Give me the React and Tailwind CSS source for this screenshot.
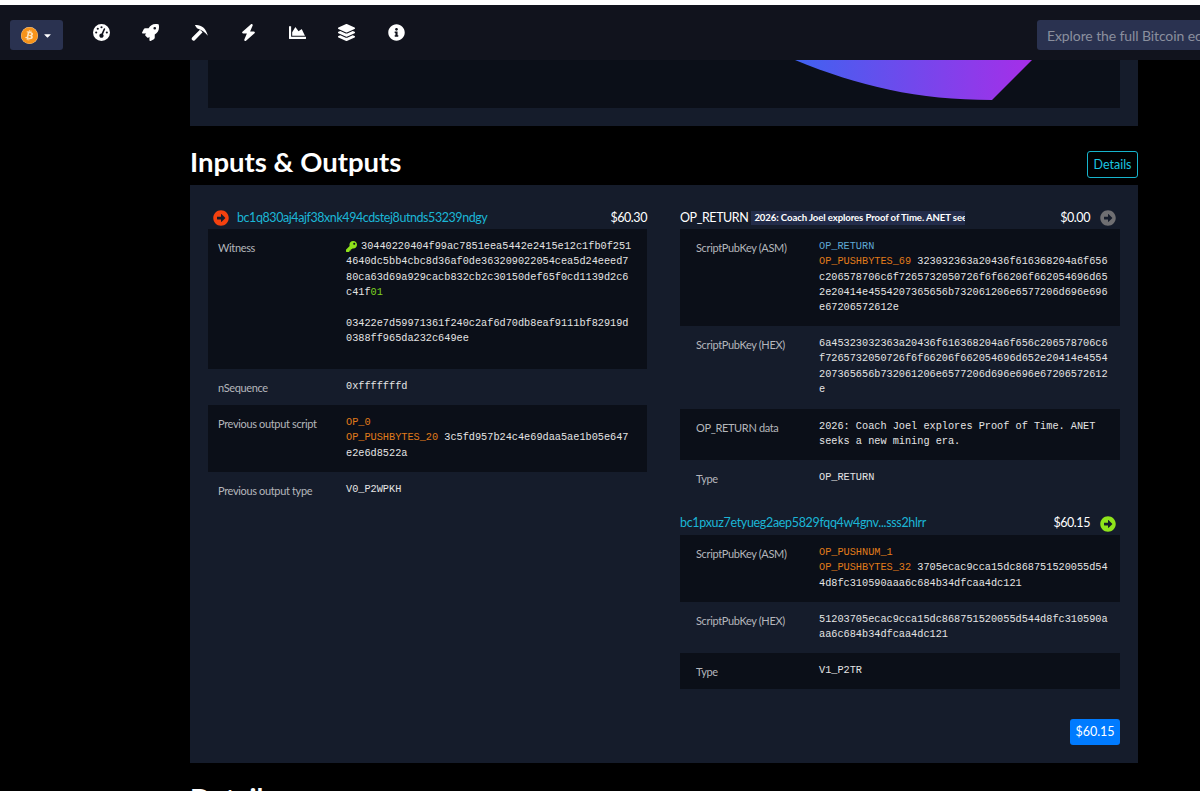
import React from 'react';
import {
  FaChartArea, FaLayerGroup, FaRocket,
  FaInfoCircle, FaArrowAltCircleRight, FaKey, FaCaretDown, FaBitcoin,
} from 'react-icons/fa';
import { FaGaugeHigh, FaBolt } from 'react-icons/fa6';

const Pickaxe = ({ className }) => (
  <svg viewBox="0 0 24 24" className={className} fill="currentColor">
    <path d="M5.5 1.6C13 .4 21 5 23.8 16.5 19.5 11.5 15.5 8.6 8.5 6Z" />
    <path d="M1.6 19 12.6 8l3.8 3.8L5.4 22.8A2.7 2.7 0 0 1 1.6 19Z" />
  </svg>
);

const navIcons = [FaGaugeHigh, FaRocket, Pickaxe, FaBolt, FaChartArea, FaLayerGroup, FaInfoCircle];

const Op = ({ children, blue }) => (
  <span className={blue ? 'text-[#5fa8d3]' : 'text-[#e07b1a]'}>{children}</span>
);

const Row = ({ label, dark, right, h, children }) => (
  <div
    style={{ height: h }}
    className={`flex pt-[9px] ${right ? 'pl-4' : 'pl-[10px]'} ${dark ? 'bg-[#0b0f18]' : ''}`}
  >
    <div className={`${right ? 'w-[123px]' : 'w-[128px]'} mt-[1px] shrink-0 text-[11px] leading-[18px] tracking-[-0.35px] text-[#b4b6bb]`}>
      {label}
    </div>
    <div
      className={`${right ? 'w-[291px]' : 'w-[288px]'} pt-[1px] font-['Liberation_Mono',monospace] text-[10.24px] leading-[15.36px] text-[#e4e4e4] break-all`}
    >
      {children}
    </div>
  </div>
);

const Arrow = ({ color }) => <FaArrowAltCircleRight className={`${color} text-base shrink-0`} />;

const App = () => (
  <div className="h-[791px] w-[1200px] overflow-hidden bg-black font-['Lato',sans-serif] text-white">
    <div className="h-[5px] bg-white" />

    <nav className="flex h-[55px] items-start bg-[#11131d] pl-[10px] pt-[15px]">
      <div className="flex h-[30px] w-[53px] items-center justify-center gap-1 rounded-[3px] bg-[#2a3250]">
        <span className="flex h-[17px] w-[17px] items-center justify-center rounded-full bg-[#fde3bd]">
          <FaBitcoin className="h-[17px] w-[17px] text-[#f7931a]" />
        </span>
        <FaCaretDown className="text-[11px] text-white" />
      </div>
      <div className="ml-[30px] mt-[4px] flex items-center gap-[32.1px]">
        {navIcons.map((Icon, i) => (
          <Icon key={i} className="h-[17px] w-[17px] text-white" />
        ))}
      </div>
      <div className="ml-auto flex h-[30px] w-[163px] items-center overflow-hidden whitespace-nowrap rounded-l-[3px] bg-[#2a3250] pl-[10px] pt-[1px] text-[14px] tracking-[-0.1px] text-[#8a8f9e]">
        Explore the full Bitcoin ecosystem
      </div>
    </nav>

    <main className="mx-[190px] w-[948px]">
      <div className="bg-[#151c2b] px-[18px] pb-[18px]">
        <div className="h-[48px] bg-[#0b0f18]">
          <svg width="912" height="48" viewBox="0 0 912 48">
            <defs>
              <linearGradient id="fee" x1="0" x2="1" y1="0" y2="0">
                <stop offset="0" stopColor="#3f62f0" />
                <stop offset="1" stopColor="#a62ee8" />
              </linearGradient>
            </defs>
            <path d="M587 0C650 26 710 40 784 40L824 0Z" fill="url(#fee)" />
          </svg>
        </div>
      </div>

      <div className="flex h-[59px] items-end justify-between pb-[7px]">
        <h2 className="mb-[-3px] text-[27.5px] font-bold leading-[38px]">Inputs &amp; Outputs</h2>
        <button className="h-[27px] w-[51px] rounded-[3px] border border-[#17b4cc] pt-[1px] text-[12.5px] text-[#1bc5e0]">
          Details
        </button>
      </div>

      <section className="h-[578px] bg-[#151c2b] px-[18px] pt-[22px]">
        <div className="flex justify-between">
          <div className="w-[439px]">
            <div className="flex h-[22px] items-center justify-between pl-[5px] text-[12.5px] tracking-[-0.43px]">
              <div className="flex items-center gap-2">
                <Arrow color="text-[#f4410f]" />
                <a className="text-[#1bb6d6]">bc1q830aj4ajf38xnk494cdstej8utnds53239ndgy</a>
              </div>
              <span>$60.30</span>
            </div>
            <Row label="Witness" dark h={140}>
              <FaKey className="mr-[4px] inline text-[11px] text-[#8fe31b]" />
              30440220404f99ac7851eea5442e2415e12c1fb0f251
              <br />
              4640dc5bb4cbc8d36af0de363209022054cea5d24eeed7
              <br />
              80ca63d69a929cacb832cb2c30150def65f0cd1139d2c6
              <br />
              c41f<span className="text-[#7ed321]">01</span>
              <br />
              <br />
              03422e7d59971361f240c2af6d70db8eaf9111bf82919d
              <br />
              0388ff965da232c649ee
            </Row>
            <Row label="nSequence" h={36}>0xfffffffd</Row>
            <Row label="Previous output script" dark h={67}>
              <Op>OP_0</Op>
              <br />
              <Op>OP_PUSHBYTES_20</Op> 3c5fd957b24c4e69daa5ae1b05e647
              <br />
              e2e6d8522a
            </Row>
            <Row label="Previous output type" h={36}>V0_P2WPKH</Row>
          </div>

          <div className="w-[440px]">
            <div className="flex h-[22px] items-center justify-between pr-1 text-[12.5px] tracking-[-0.43px]">
              <div className="flex items-center gap-[3px]">
                <span>OP_RETURN</span>
                <span className="w-[214px] overflow-hidden whitespace-nowrap bg-[#232c4a] pl-[3px] text-[9.6px] font-bold leading-[14px] tracking-[-0.1px]">
                  2026: Coach Joel explores Proof of Time. ANET seeks a new mining era.
                </span>
              </div>
              <div className="flex items-center gap-[10px]">
                <span>$0.00</span>
                <Arrow color="text-[#6f6f72]" />
              </div>
            </div>
            <Row label="ScriptPubKey (ASM)" right dark h={97}>
              <Op blue>OP_RETURN</Op>
              <br />
              <Op>OP_PUSHBYTES_69</Op> 323032363a20436f616368204a6f656c206578706c6f7265732050726f6f66206f662054696d652e20414e4554207365656b732061206e6577206d696e696e67206572612e
            </Row>
            <Row label="ScriptPubKey (HEX)" right h={83}>
              6a45323032363a20436f616368204a6f656c206578706c6f7265732050726f6f66206f662054696d652e20414e4554207365656b732061206e6577206d696e696e67206572612e
            </Row>
            <Row label="OP_RETURN data" right dark h={51}>
              <span className="break-normal">2026: Coach Joel explores Proof of Time. ANET seeks a new mining era.</span>
            </Row>
            <Row label="Type" right h={36}>OP_RETURN</Row>

            <div className="mt-[16px] flex h-[23px] items-center justify-between pr-1 text-[12.5px] tracking-[-0.43px]">
              <a className="tracking-[-0.33px] text-[#1bb6d6]">bc1pxuz7etyueg2aep5829fqq4w4gnv...sss2hlrr</a>
              <div className="flex items-center gap-[10px]">
                <span>$60.15</span>
                <Arrow color="text-[#8fe31b]" />
              </div>
            </div>
            <Row label="ScriptPubKey (ASM)" right dark h={67}>
              <Op>OP_PUSHNUM_1</Op>
              <br />
              <Op>OP_PUSHBYTES_32</Op> 3705ecac9cca15dc868751520055d544d8fc310590aaa6c684b34dfcaa4dc121
            </Row>
            <Row label="ScriptPubKey (HEX)" right h={51}>
              51203705ecac9cca15dc868751520055d544d8fc310590aaa6c684b34dfcaa4dc121
            </Row>
            <Row label="Type" right dark h={36}>V1_P2TR</Row>

            <div className="mt-[30px] flex justify-end">
              <span className="flex h-[26px] w-[50px] items-center justify-center rounded-[3px] bg-[#007bff] text-[12.5px]">
                $60.15
              </span>
            </div>
          </div>
        </div>
      </section>

      <h2 className="mt-[16px] text-[27.5px] font-bold leading-[38px]">Details</h2>
    </main>
  </div>
);

export default App;
